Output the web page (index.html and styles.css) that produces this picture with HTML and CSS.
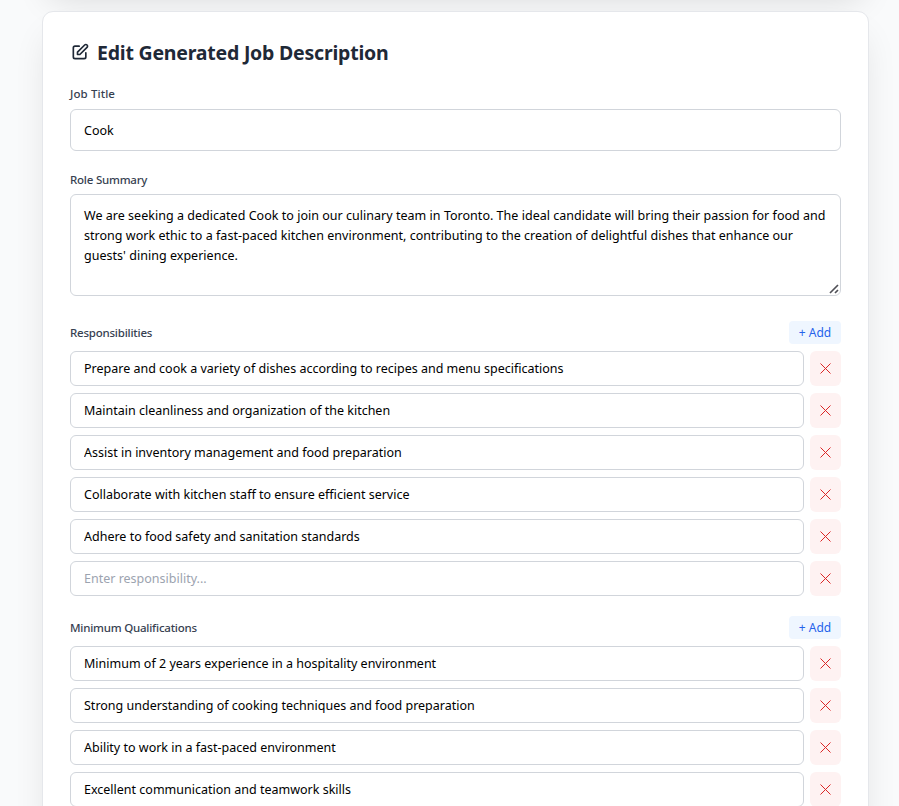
FILE: index.html
```html
<!DOCTYPE html>
<html lang="en">
<head>
<meta charset="utf-8">
<title>Edit Generated Job Description</title>
<link rel="stylesheet" href="styles.css">
</head>
<body>
<svg class="defs" aria-hidden="true"><symbol id="cross" viewBox="0 0 11 11"><path d="M.5.5l10 10M10.500.5l-10 10" fill="none" stroke="currentColor" stroke-width="1"/></symbol></svg>
<div class="previous-card"></div>
<main class="card">
  <h1 class="title">
    <svg class="title-icon" viewBox="0 0 24 24" fill="none" stroke="currentColor" stroke-width="2" stroke-linecap="round" stroke-linejoin="round"><path d="M11 5H6a2 2 0 00-2 2v11a2 2 0 002 2h11a2 2 0 002-2v-5m-1.414-9.414a2 2 0 112.828 2.828L11.828 15H9v-2.828l8.586-8.586z"/></svg>
    <span>Edit Generated Job Description</span>
  </h1>
  <section class="field">
    <label class="label label-title" for="job">Job Title</label>
    <input class="input input-large" id="job" value="Cook">
  </section>
  <section class="field field-summary">
    <label class="label" for="summary">Role Summary</label>
    <div class="summary-wrap">
      <textarea class="input summary" id="summary">We are seeking a dedicated Cook to join our culinary team in Toronto. The ideal candidate will bring their passion for food and strong work ethic to a fast-paced kitchen environment, contributing to the creation of delightful dishes that enhance our guests' dining experience.</textarea>
      <svg class="grip" viewBox="0 0 10 10"><path d="M1 9L9 1M6 9l3-3" fill="none" stroke="#505057" stroke-width="1.7"/></svg>
    </div>
  </section>
  <section class="list">
    <div class="list-head"><span class="label">Responsibilities</span><button class="add">+ Add</button></div>
    <div class="row"><input class="input" value="Prepare and cook a variety of dishes according to recipes and menu specifications"><button class="remove" aria-label="Remove"><svg><use href="#cross"/></svg></button></div>
    <div class="row"><input class="input" value="Maintain cleanliness and organization of the kitchen"><button class="remove" aria-label="Remove"><svg><use href="#cross"/></svg></button></div>
    <div class="row"><input class="input" value="Assist in inventory management and food preparation"><button class="remove" aria-label="Remove"><svg><use href="#cross"/></svg></button></div>
    <div class="row"><input class="input" value="Collaborate with kitchen staff to ensure efficient service"><button class="remove" aria-label="Remove"><svg><use href="#cross"/></svg></button></div>
    <div class="row"><input class="input" value="Adhere to food safety and sanitation standards"><button class="remove" aria-label="Remove"><svg><use href="#cross"/></svg></button></div>
    <div class="row"><input class="input" placeholder="Enter responsibility..."><button class="remove" aria-label="Remove"><svg><use href="#cross"/></svg></button></div>
  </section>
  <section class="list">
    <div class="list-head"><span class="label">Minimum Qualifications</span><button class="add">+ Add</button></div>
    <div class="row"><input class="input" value="Minimum of 2 years experience in a hospitality environment"><button class="remove" aria-label="Remove"><svg><use href="#cross"/></svg></button></div>
    <div class="row"><input class="input" value="Strong understanding of cooking techniques and food preparation"><button class="remove" aria-label="Remove"><svg><use href="#cross"/></svg></button></div>
    <div class="row"><input class="input" value="Ability to work in a fast-paced environment"><button class="remove" aria-label="Remove"><svg><use href="#cross"/></svg></button></div>
    <div class="row"><input class="input" value="Excellent communication and teamwork skills"><button class="remove" aria-label="Remove"><svg><use href="#cross"/></svg></button></div>
  </section>
</main>
</body>
</html>
```
FILE: styles.css
```css
* { box-sizing: border-box; }
body {
  margin: 0;
  height: 806px;
  overflow: hidden;
  background: #f9fafb;
  font-family: "Noto Sans", "Open Sans", sans-serif;
  font-size: 13px;
}
.defs { position: absolute; width: 0; height: 0; }
.previous-card {
  height: 100px;
  margin: -112px 30px 0 42px;
  border-radius: 10px;
  background: #fff;
  box-shadow: 0 18px 34px -8px rgba(0, 0, 0, .14);
}
.card {
  height: 820px;
  margin: 23px 30px 0 42px;
  padding: 27px;
  border: 1px solid #e5e7eb;
  border-radius: 11px;
  background: #fff;
  box-shadow: 0 20px 36px -8px rgba(0, 0, 0, .12);
}
.title {
  display: flex;
  align-items: center;
  gap: 7px;
  height: 28px;
  margin: 0 0 18px;
  color: #1f2937;
  font-size: 19.5px;
  line-height: 28px;
  font-weight: 700;
  letter-spacing: -.22px;
  white-space: nowrap;
}
.title-icon { width: 20px; height: 20px; flex: none; margin-top: -2px; }
.field { margin-bottom: 20px; }
.label {
  display: block;
  height: 18px;
  color: #374151;
  font-size: 11.5px;
  line-height: 18px;
  font-weight: 500;
  letter-spacing: -.22px;
}
.label-title { letter-spacing: .1px; }
.field .label { margin-bottom: 6px; }
.field-summary .label { margin-bottom: 5px; }
.input {
  display: block;
  width: 100%;
  height: 35px;
  margin: 0;
  padding: 0 13px;
  border: 1px solid #d1d5db;
  border-radius: 6px;
  outline: none;
  background: #fff;
  color: #000;
  font: inherit;
  font-size: 12.5px;
}
.input::placeholder { color: #9ca3af; opacity: 1; }
.input-large { height: 42px; }
.summary-wrap { position: relative; }
.summary {
  height: 102px;
  padding: 11px 11px 9px 13px;
  resize: none;
  overflow: hidden;
  line-height: 20px;
  letter-spacing: .025px;
}
.grip { position: absolute; right: 2px; bottom: 2px; width: 10px; height: 10px; }
.list { margin-top: 25px; }
.list + .list { margin-top: 20px; }
.list-head {
  display: flex;
  justify-content: space-between;
  align-items: center;
  height: 23px;
  margin-bottom: 7px;
}
.add {
  width: 52px;
  height: 23px;
  padding: 0;
  border: 0;
  border-radius: 4px;
  background: #eff6ff;
  color: #2563eb;
  font: inherit;
  font-size: 12px;
}
.row { display: flex; gap: 6px; margin-bottom: 7px; }
.row .input { flex: 1; min-width: 0; }
.remove {
  display: flex;
  align-items: center;
  justify-content: center;
  width: 31px;
  height: 35px;
  padding: 0;
  border: 0;
  border-radius: 6px;
  background: #fef2f2;
  color: #dc2626;
}
.remove svg { width: 11px; height: 11px; }
```
